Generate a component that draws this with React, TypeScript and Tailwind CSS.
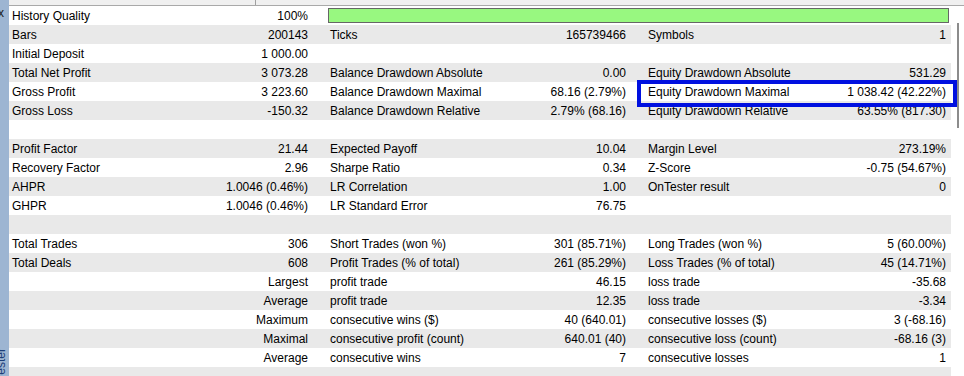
import React from "react";

type Cell = [string, string] | null;

const rows: { c1: Cell; c2?: Cell; c3?: Cell; bar?: boolean }[] = [
  { c1: ["History Quality", "100%"], bar: true },
  { c1: ["Bars", "200143"], c2: ["Ticks", "165739466"], c3: ["Symbols", "1"] },
  { c1: ["Initial Deposit", "1 000.00"], c2: null, c3: null },
  { c1: ["Total Net Profit", "3 073.28"], c2: ["Balance Drawdown Absolute", "0.00"], c3: ["Equity Drawdown Absolute", "531.29"] },
  { c1: ["Gross Profit", "3 223.60"], c2: ["Balance Drawdown Maximal", "68.16 (2.79%)"], c3: ["Equity Drawdown Maximal", "1 038.42 (42.22%)"] },
  { c1: ["Gross Loss", "-150.32"], c2: ["Balance Drawdown Relative", "2.79% (68.16)"], c3: ["Equity Drawdown Relative", "63.55% (817.30)"] },
  { c1: null, c2: null, c3: null },
  { c1: ["Profit Factor", "21.44"], c2: ["Expected Payoff", "10.04"], c3: ["Margin Level", "273.19%"] },
  { c1: ["Recovery Factor", "2.96"], c2: ["Sharpe Ratio", "0.34"], c3: ["Z-Score", "-0.75 (54.67%)"] },
  { c1: ["AHPR", "1.0046 (0.46%)"], c2: ["LR Correlation", "1.00"], c3: ["OnTester result", "0"] },
  { c1: ["GHPR", "1.0046 (0.46%)"], c2: ["LR Standard Error", "76.75"], c3: null },
  { c1: null, c2: null, c3: null },
  { c1: ["Total Trades", "306"], c2: ["Short Trades (won %)", "301 (85.71%)"], c3: ["Long Trades (won %)", "5 (60.00%)"] },
  { c1: ["Total Deals", "608"], c2: ["Profit Trades (% of total)", "261 (85.29%)"], c3: ["Loss Trades (% of total)", "45 (14.71%)"] },
  { c1: ["", "Largest"], c2: ["profit trade", "46.15"], c3: ["loss trade", "-35.68"] },
  { c1: ["", "Average"], c2: ["profit trade", "12.35"], c3: ["loss trade", "-3.34"] },
  { c1: ["", "Maximum"], c2: ["consecutive wins ($)", "40 (640.01)"], c3: ["consecutive losses ($)", "3 (-68.16)"] },
  { c1: ["", "Maximal"], c2: ["consecutive profit (count)", "640.01 (40)"], c3: ["consecutive loss (count)", "-68.16 (3)"] },
  { c1: ["", "Average"], c2: ["consecutive wins", "7"], c3: ["consecutive losses", "1"] },
  { c1: null, c2: null, c3: null },
];

function CellView({ cell, cls }: { cell: Cell | undefined; cls: string }) {
  return (
    <div className={`flex justify-between whitespace-nowrap pt-[1px] leading-[18px] ${cls}`}>
      <span>{cell ? cell[0] : ""}</span>
      <span>{cell ? cell[1] : ""}</span>
    </div>
  );
}

export default function App() {
  return (
    <div
      className="relative flex w-[964px] h-[376px] overflow-hidden bg-white text-[12px] text-black"
      style={{ fontFamily: '"Liberation Sans", Arial, sans-serif' }}
    >
      {/* left side tab strip */}
      <div className="relative w-[9px] h-full bg-[#9db5d2] overflow-hidden shrink-0">
        <span className="absolute left-[-2px] top-[7px] text-[12px] leading-[12px] text-[#1a1a1a]">x</span>
        <span
          className="absolute left-[-6px] top-[348px] text-[12px] leading-[14px] text-[#1c3d78] whitespace-nowrap"
          style={{ writingMode: "vertical-rl", transform: "rotate(180deg)" }}
        >
          Strategy Tester
        </span>
      </div>

      <div className="flex flex-col flex-1">
        {/* header strip */}
        <div className="flex h-[6px] bg-[#f0f0f0] border-b border-[#a9a9a9] shrink-0">
          <div className="w-[246px]" />
          <div className="w-px h-full bg-[#a0a0a0]" />
        </div>

        <div className="flex flex-1">
          {/* table */}
          <div className="flex flex-col w-[942px]">
            {rows.map((r, i) => (
              <div
                key={i}
                className={`flex h-[19px] shrink-0 ${i % 2 === 0 ? "bg-white" : "bg-[#e9e9e9]"}`}
              >
                <CellView cell={r.c1} cls="w-[309px] pl-[3px] pr-[10px]" />
                {r.bar ? (
                  <div className="flex-1 pl-[10px] pr-[2px] py-[2px]">
                    <div className="h-full bg-[#98f880] border border-[#666666]" />
                  </div>
                ) : (
                  <>
                    <CellView cell={r.c2} cls="w-[318px] pl-[12px] pr-[10px]" />
                    <CellView cell={r.c3} cls="flex-1 pl-[12px] pr-[5px]" />
                  </>
                )}
              </div>
            ))}
          </div>
          {/* right scroll area */}
          <div className="flex flex-col w-[13px] pt-[17px]">
            <div className="ml-[6px] w-[2px] h-[105px] bg-[#8c8c8c]" />
          </div>
        </div>
      </div>

      {/* highlight annotation box */}
      <div className="absolute left-[637px] top-[80px] w-[320px] h-[27px] border-[4px] border-[#0010e0]" />
    </div>
  );
}
